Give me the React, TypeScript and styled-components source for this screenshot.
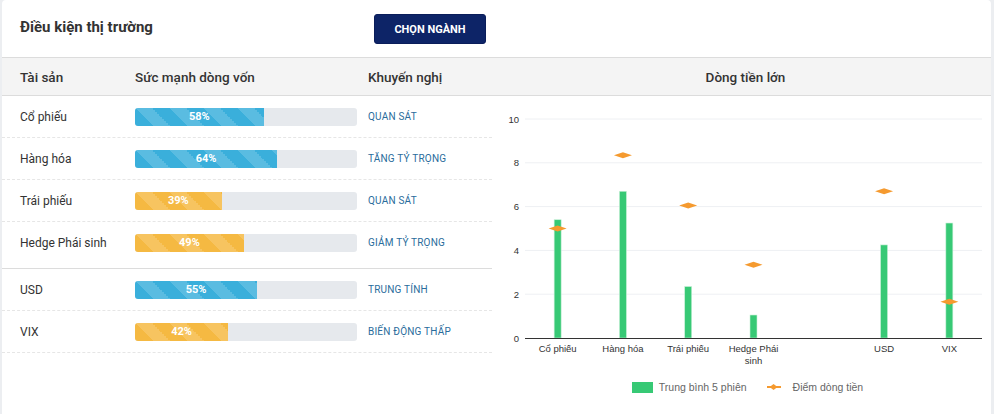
import styled, { createGlobalStyle } from 'styled-components';

type Asset = {
  name: string;
  strength: number;
  tone: 'blue' | 'yellow';
  advice: string;
};

const groups: Asset[][] = [
  [
    { name: 'Cổ phiếu', strength: 58, tone: 'blue', advice: 'QUAN SÁT' },
    { name: 'Hàng hóa', strength: 64, tone: 'blue', advice: 'TĂNG TỶ TRỌNG' },
    { name: 'Trái phiếu', strength: 39, tone: 'yellow', advice: 'QUAN SÁT' },
    { name: 'Hedge Phái sinh', strength: 49, tone: 'yellow', advice: 'GIẢM TỶ TRỌNG' },
  ],
  [
    { name: 'USD', strength: 55, tone: 'blue', advice: 'TRUNG TÍNH' },
    { name: 'VIX', strength: 42, tone: 'yellow', advice: 'BIẾN ĐỘNG THẤP' },
  ],
];

// chart data, the empty entry is a blank slot on the x axis
const flows: { label: string[]; avg: number; point: number }[] = [
  { label: ['Cổ phiếu'], avg: 5.4, point: 5.0 },
  { label: ['Hàng hóa'], avg: 6.7, point: 8.35 },
  { label: ['Trái phiếu'], avg: 2.35, point: 6.05 },
  { label: ['Hedge Phái', 'sinh'], avg: 1.05, point: 3.35 },
  { label: [], avg: 0, point: -1 },
  { label: ['USD'], avg: 4.25, point: 6.7 },
  { label: ['VIX'], avg: 5.25, point: 1.65 },
];

const CHART_W = 499;
const CHART_H = 280;
const PLOT_L = 33;
const PLOT_R = 490;
const BASE_Y = 242;
const UNIT = 21.9;

function FlowChart(): JSX.Element {
  const slot = (PLOT_R - PLOT_L) / flows.length;
  const ticks = [0, 2, 4, 6, 8, 10];
  return (
    <svg width={CHART_W} height={CHART_H} viewBox={`0 0 ${CHART_W} ${CHART_H}`}>
      {ticks.map((t) => {
        const y = BASE_Y - t * UNIT;
        return (
          <g key={t}>
            {t > 0 && <line x1={PLOT_L} x2={PLOT_R} y1={y} y2={y} stroke='#eef0f3' strokeWidth={1} />}
            <text x={27} y={y + 3.5} textAnchor='end' fontSize={9.5} fill='#333' fontFamily='Liberation Sans, Arial, sans-serif'>
              {t}
            </text>
          </g>
        );
      })}
      {flows.map((f, i) => {
        const cx = PLOT_L + slot * (i + 0.5);
        const h = f.avg * UNIT;
        const py = BASE_Y - f.point * UNIT;
        return (
          <g key={i}>
            {f.avg > 0 && <rect x={cx - 3.5} y={BASE_Y - h} width={7} height={h} fill='#37c975' stroke='#c9f0d8' strokeWidth={0.6} />}
            {f.point >= 0 && (
              <polygon points={`${cx - 9},${py} ${cx},${py - 3} ${cx + 9},${py} ${cx},${py + 3}`} fill='#f59a2f' />
            )}
            {f.label.map((l, j) => (
              <text
                key={l}
                x={cx}
                y={BASE_Y + 14 + j * 12}
                textAnchor='middle'
                fontSize={9.5}
                fill='#333'
                fontFamily='Liberation Sans, Arial, sans-serif'
              >
                {l}
              </text>
            ))}
          </g>
        );
      })}
      <line x1={PLOT_L} x2={PLOT_R} y1={BASE_Y + 0.5} y2={BASE_Y + 0.5} stroke='#333' strokeWidth={1} />
    </svg>
  );
}

export default function App(): JSX.Element {
  return (
    <>
      <GlobalStyle />
      <Card_div>
        <Top_div>
          <Title_h2>Điều kiện thị trường</Title_h2>
          <Pick_button>CHỌN NGÀNH</Pick_button>
        </Top_div>
        <Body_div>
          {/* Left: table */}
          <section>
            <HeadRow_div>
              <NameCell_div>Tài sản</NameCell_div>
              <BarCell_div>Sức mạnh dòng vốn</BarCell_div>
              <div>Khuyến nghị</div>
            </HeadRow_div>
            {groups.map((group, gi) => (
              <Group_div key={gi} $first={gi === 0}>
                {group.map((a, i) => (
                  <Row_div key={a.name} $last={gi === 0 && i === group.length - 1}>
                    <NameCell_div>{a.name}</NameCell_div>
                    <BarCell_div>
                      <Track_div>
                        <Fill_div $tone={a.tone} style={{ width: `${a.strength}%` }}>
                          {a.strength}%
                        </Fill_div>
                      </Track_div>
                    </BarCell_div>
                    <Advice_span>{a.advice}</Advice_span>
                  </Row_div>
                ))}
              </Group_div>
            ))}
          </section>
          {/* Right: chart */}
          <section>
            <ChartHead_div>Dòng tiền lớn</ChartHead_div>
            <FlowChart />
            <Legend_div>
              <LegendItem_span>
                <Swatch_i />
                Trung bình 5 phiên
              </LegendItem_span>
              <LegendItem_span>
                <Marker_i />
                Điểm dòng tiền
              </LegendItem_span>
            </Legend_div>
          </section>
        </Body_div>
      </Card_div>
    </>
  );
}
// --------------- Styled ---------------
const GlobalStyle = createGlobalStyle`
  body {
    margin: 0;
    background: #eceef1;
    font-family: Roboto, 'Liberation Sans', Arial, sans-serif;
    color: #333;
  }
`;

const Card_div = styled.div`
  margin-left: 2px;
  width: 989px;
  height: 414px;
  background: #fff;
  border-radius: 4px 4px 0 0;
  overflow: hidden;
`;

const Top_div = styled.div`
  width: 490px;
  height: 57px;
  box-sizing: border-box;
  padding: 0 6px 0 18px;
  display: flex;
  align-items: center;
  justify-content: space-between;
`;

const Title_h2 = styled.h2`
  margin: 0 0 3px;
  font-size: 15px;
  font-weight: 700;
  color: #333;
`;

const Pick_button = styled.button`
  width: 112px;
  height: 30px;
  margin-top: 1px;
  border: 1px solid #0a1d5a;
  border-radius: 3px;
  background: #0d2467;
  color: #fff;
  font-family: Roboto, sans-serif;
  font-size: 11px;
  font-weight: 700;
  cursor: pointer;
`;

const Body_div = styled.div`
  display: grid;
  grid-template-columns: 490px 1fr;
`;

const HeadRow_div = styled.div`
  height: 37px;
  box-sizing: content-box;
  display: flex;
  align-items: center;
  padding-left: 18px;
  background: #f4f4f4;
  border-top: 1px solid #dcdcdc;
  border-bottom: 1px solid #dcdcdc;
  font-size: 13.5px;
  font-weight: 500;
  color: #333;
`;

const ChartHead_div = styled(HeadRow_div)`
  justify-content: center;
  padding-left: 8px;
`;

const NameCell_div = styled.div`
  width: 115px;
  flex-shrink: 0;
`;

const BarCell_div = styled.div`
  width: 222px;
  margin-right: 11px;
  flex-shrink: 0;
`;

const Group_div = styled.div<{ $first: boolean }>`
  ${({ $first }) => ($first ? 'padding-bottom: 4px;' : 'border-top: 1px solid #dcdcdc;')}
`;

const Row_div = styled.div<{ $last: boolean }>`
  height: 41px;
  display: flex;
  align-items: center;
  padding-left: 18px;
  font-size: 12px;
  color: #333;
  border-bottom: 1px dashed ${({ $last }) => ($last ? 'transparent' : '#e6e6e6')};
`;

const Track_div = styled.div`
  height: 18px;
  background: #e6e9ed;
  border-radius: 3px;
  overflow: hidden;
`;

const Fill_div = styled.div<{ $tone: 'blue' | 'yellow' }>`
  height: 100%;
  display: flex;
  align-items: center;
  justify-content: center;
  color: #fff;
  font-size: 11px;
  font-weight: 700;
  background-color: ${({ $tone }) => ($tone === 'blue' ? '#3aafdb' : '#f5b942')};
  background-image: linear-gradient(
    45deg,
    rgba(255, 255, 255, 0.16) 25%,
    transparent 25%,
    transparent 50%,
    rgba(255, 255, 255, 0.16) 50%,
    rgba(255, 255, 255, 0.16) 75%,
    transparent 75%,
    transparent
  );
  background-size: 34px 34px;
`;

const Advice_span = styled.span`
  font-size: 10px;
  color: #2a6c9c;
  letter-spacing: 0.2px;
`;

const Legend_div = styled.div`
  display: flex;
  justify-content: center;
  gap: 20px;
  padding: 1px 0 0 12px;
  font-family: 'Liberation Sans', Arial, sans-serif;
  font-size: 10.5px;
  color: #666;
`;

const LegendItem_span = styled.span`
  display: flex;
  align-items: center;
  gap: 6px;
`;

const Swatch_i = styled.i`
  width: 21px;
  height: 11px;
  background: #37c975;
`;

const Marker_i = styled.i`
  position: relative;
  width: 14px;
  height: 2px;
  margin-right: 6px;
  background: #f59a2f;
  &::after {
    content: '';
    position: absolute;
    left: 3px;
    top: -2px;
    width: 8px;
    height: 6px;
    background: #f59a2f;
    clip-path: polygon(0 50%, 50% 0, 100% 50%, 50% 100%);
  }
`;
